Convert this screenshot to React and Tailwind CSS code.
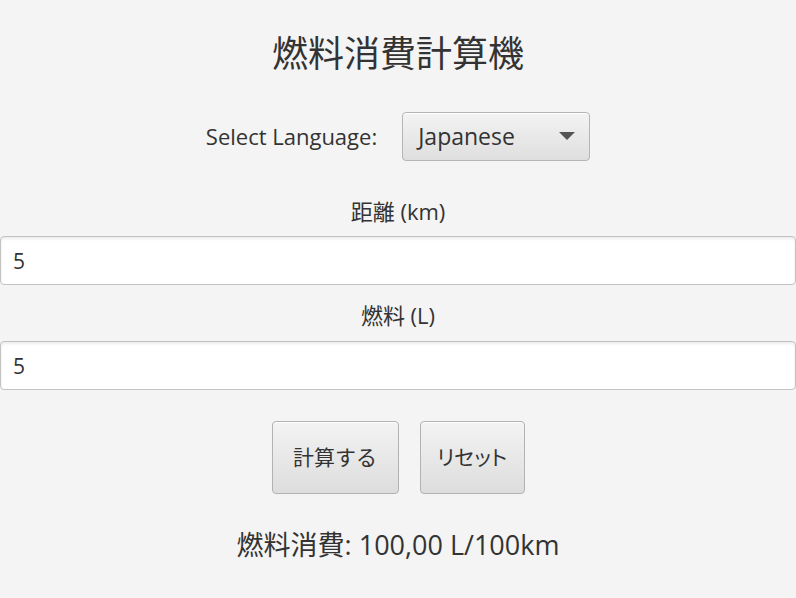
import React, { useState } from 'react'

const FONT = "font-['Open_Sans','Noto_Sans_CJK_JP',sans-serif]";

const Field = ({ value }) => (
    <div className="w-full h-[49px] bg-white border border-[#c2c2c2] rounded-[4px] shadow-[inset_0_2px_3px_rgba(0,0,0,0.08)] flex items-center px-[12px] pt-[2px] text-[21px] text-[#333]">
        {value}
    </div>
)

const Button = ({ children, width }) => (
    <button className={`${width} h-[73px] rounded-[4px] border border-[#b2b2b2] bg-gradient-to-b from-[#f3f3f3] to-[#dddddd] text-[21px] text-[#333] shadow-[inset_0_1px_0_#ffffff]`}>
        {children}
    </button>
)

const App = () => {
    const [lang] = useState("Japanese")

    return (
        <div className={`${FONT} w-[796px] h-[598px] bg-[#f4f4f4] flex flex-col items-center pt-[32px] text-[#333] overflow-hidden`}>
            <h1 className="text-[36px] leading-[44px]">燃料消費計算機</h1>

            <div className="mt-[36px] flex items-center gap-[25px]">
                <span className="text-[22px]">Select Language:</span>
                <div className="w-[188px] h-[49px] rounded-[4px] border border-[#b5b5b5] bg-gradient-to-b from-[#f3f3f3] to-[#dfdfdf] flex items-center justify-between pl-[15px] pr-[14px] text-[23px] shadow-[inset_0_1px_0_#ffffff]">
                    <span>{lang}</span>
                    <svg width="16" height="9" viewBox="0 0 16 9">
                        <path d="M0 0 L16 0 L8 8 Z" fill="#555" />
                    </svg>
                </div>
            </div>

            <p className="mt-[36px] text-[22px] leading-[28px]">距離 (km)</p>
            <div className="mt-[11px] w-full">
                <Field value="5" />
            </div>

            <p className="mt-[16px] text-[22px] leading-[28px]">燃料 (L)</p>
            <div className="mt-[12px] w-full">
                <Field value="5" />
            </div>

            <div className="mt-[31px] flex gap-[21px]">
                <Button width="w-[127px]">計算する</Button>
                <Button width="w-[105px]"><span className="[font-feature-settings:'palt']">リセット</span></Button>
            </div>

            <p className="mt-[35px] text-[27px] leading-[32px]">燃料消費: 100,00 L/100km</p>
        </div>
    )
}

export default App;
